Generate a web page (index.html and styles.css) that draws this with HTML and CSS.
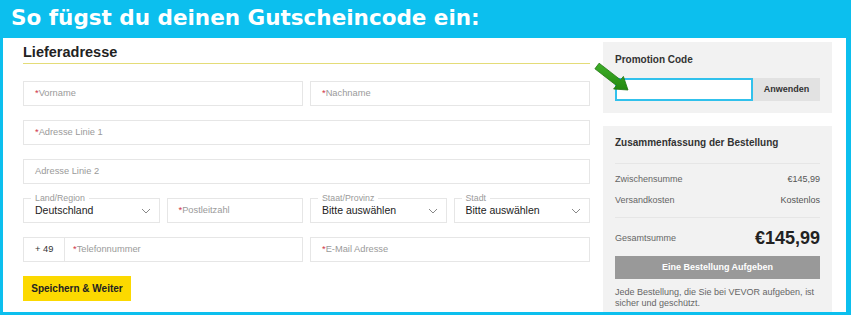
FILE: index.html
```html
<!DOCTYPE html>
<html lang="de">
<head>
<meta charset="utf-8">
<link rel="stylesheet" href="styles.css">
</head>
<body>
<div class="title">So fügst du deinen Gutscheincode ein:</div>
<div class="panel">
  <div class="form">
    <h2 class="heading">Lieferadresse</h2>
    <div class="row">
      <div class="field"><span class="req">*</span>Vorname</div>
      <div class="field"><span class="req">*</span>Nachname</div>
    </div>
    <div class="row">
      <div class="field"><span class="req">*</span>Adresse Linie 1</div>
    </div>
    <div class="row">
      <div class="field">Adresse Linie 2</div>
    </div>
    <div class="row">
      <div class="field select"><span class="flabel">Land/Region</span><span class="value">Deutschland</span><svg class="chev" viewBox="0 0 10 6"><path d="M1 1l4 4 4-4" fill="none" stroke="#888" stroke-width="1"/></svg></div>
      <div class="field"><span class="req">*</span>Postleitzahl</div>
      <div class="field select"><span class="flabel">Staat/Provinz</span><span class="value">Bitte auswählen</span><svg class="chev" viewBox="0 0 10 6"><path d="M1 1l4 4 4-4" fill="none" stroke="#888" stroke-width="1"/></svg></div>
      <div class="field select"><span class="flabel">Stadt</span><span class="value">Bitte auswählen</span><svg class="chev" viewBox="0 0 10 6"><path d="M1 1l4 4 4-4" fill="none" stroke="#888" stroke-width="1"/></svg></div>
    </div>
    <div class="row">
      <div class="field phone"><span class="cc">+ 49</span><span class="ph"><span class="req">*</span>Telefonnummer</span></div>
      <div class="field"><span class="req">*</span>E-Mail Adresse</div>
    </div>
    <button class="save">Speichern &amp; Weiter</button>
  </div>
  <div class="side">
    <div class="card promo">
      <div class="card-title">Promotion Code</div>
      <div class="promo-row">
        <div class="promo-input"></div>
        <div class="apply">Anwenden</div>
      </div>
    </div>
    <div class="card summary">
      <div class="card-title">Zusammenfassung der Bestellung</div>
      <div class="lines">
        <div class="line"><span>Zwischensumme</span><span>€145,99</span></div>
        <div class="line"><span>Versandkosten</span><span>Kostenlos</span></div>
      </div>
      <div class="total"><span>Gesamtsumme</span><span class="amount">€145,99</span></div>
      <div class="order">Eine Bestellung Aufgeben</div>
      <p class="note">Jede Bestellung, die Sie bei VEVOR aufgeben, ist sicher und geschützt.</p>
    </div>
  </div>
  <svg class="arrow" viewBox="0 0 38 32" width="38" height="32">
    <defs>
      <linearGradient id="g" x1="0" y1="0" x2="0" y2="1">
        <stop offset="0" stop-color="#3fb02a"/>
        <stop offset="1" stop-color="#23880f"/>
      </linearGradient>
    </defs>
    <path d="M7.1 3.2 L28.6 19.9 L31.4 16.4 L36 30 L21.6 29 L24.4 25.5 L2.9 8.8 Z" fill="url(#g)" stroke="#1f7410" stroke-width="0.8" stroke-linejoin="round"/>
  </svg>
</div>
</body>
</html>
```

FILE: styles.css
```css
* { box-sizing: border-box; }
html, body { margin: 0; padding: 0; }
body {
  background: #0cbfee;
  width: 851px;
  height: 315px;
  overflow: hidden;
  font-family: "Liberation Sans", Arial, sans-serif;
}
.title {
  height: 38px;
  padding-left: 11px;
  line-height: 36px;
  color: #fff;
  font-family: "DejaVu Sans", sans-serif;
  font-weight: bold;
  font-size: 21.5px;
}
.panel {
  position: relative;
  margin: 0 5px 0 3px;
  height: 274px;
  background: #fff;
  display: flex;
  overflow: hidden;
}
.form {
  width: 567px;
  margin-left: 20px;
  display: flex;
  flex-direction: column;
}
.heading {
  margin: 4px 0 0;
  font-size: 14.5px;
  line-height: 20px;
  font-weight: bold;
  color: #222;
  border-bottom: 1px solid #e4dc78;
  padding-bottom: 1px;
}
.row {
  display: flex;
  gap: 7px;
  margin-top: 14px;
}
.heading + .row { margin-top: 17px; }
.field {
  flex: 1 1 100px;
  min-width: 0;
  position: relative;
  height: 25px;
  border: 1px solid #e6e6e6;
  padding-left: 11px;
  font-size: 9.3px;
  line-height: 23px;
  color: #9a9a9a;
  white-space: nowrap;
}
.req { color: #d0384a; }
.flabel {
  position: absolute;
  top: -7px;
  left: 7px;
  padding: 0 4px;
  background: #fff;
  line-height: 12px;
  font-size: 8.8px;
  color: #9a9a9a;
}
.value {
  display: block;
  font-size: 10.5px;
  color: #222;
}
.chev {
  position: absolute;
  right: 8px;
  top: 9px;
  width: 10px;
  height: 6px;
}
.phone {
  display: flex;
  padding-left: 0;
}
.cc {
  flex: none;
  width: 41px;
  padding-left: 11px;
  color: #333;
  border-right: 1px solid #e6e6e6;
}
.ph { padding-left: 8px; }
.save {
  margin-top: 14px;
  align-self: flex-start;
  width: 108px;
  height: 25px;
  border: none;
  background: #fcd900;
  font-family: "Liberation Sans", Arial, sans-serif;
  font-weight: bold;
  font-size: 10px;
  color: #222;
  padding: 0;
}
.side {
  width: 229px;
  margin-left: 13px;
  display: flex;
  flex-direction: column;
}
.card {
  background: #f2f2f2;
  padding: 0 12px;
  flex-shrink: 0;
}
.promo {
  margin-top: 4px;
  height: 71px;
  padding-top: 11px;
}
.card-title {
  font-size: 10px;
  font-weight: bold;
  color: #333;
  line-height: 14px;
}
.promo-row {
  display: flex;
  margin-top: 11px;
}
.promo-input {
  width: 138px;
  height: 23px;
  background: #fff;
  border: 2px solid #31c1ec;
}
.apply {
  flex: 1;
  height: 23px;
  background: #e2e2e2;
  font-size: 9px;
  font-weight: bold;
  color: #333;
  text-align: center;
  line-height: 23px;
}
.summary {
  margin-top: 13px;
  flex: 1 1 auto;
  padding-top: 10px;
}
.lines {
  margin-top: 13px;
  border-top: 1px solid #e6e6e6;
  border-bottom: 1px solid #e6e6e6;
  padding: 4px 0 7px;
}
.line, .total {
  display: flex;
  justify-content: space-between;
  align-items: center;
  font-size: 9px;
  color: #666;
}
.line { height: 21px; }
.line span:last-child { color: #555; }
.total {
  height: 20px;
  margin-top: 10px;
}
.amount {
  font-size: 18px;
  font-weight: bold;
  color: #222;
}
.order {
  margin-top: 8px;
  height: 23px;
  background: #999;
  color: #fff;
  font-size: 9px;
  font-weight: bold;
  text-align: center;
  line-height: 23px;
}
.note {
  margin: 8px 0 0;
  font-size: 9px;
  line-height: 11px;
  color: #666;
}
.arrow {
  position: absolute;
  left: 589px;
  top: 22px;
}
```
